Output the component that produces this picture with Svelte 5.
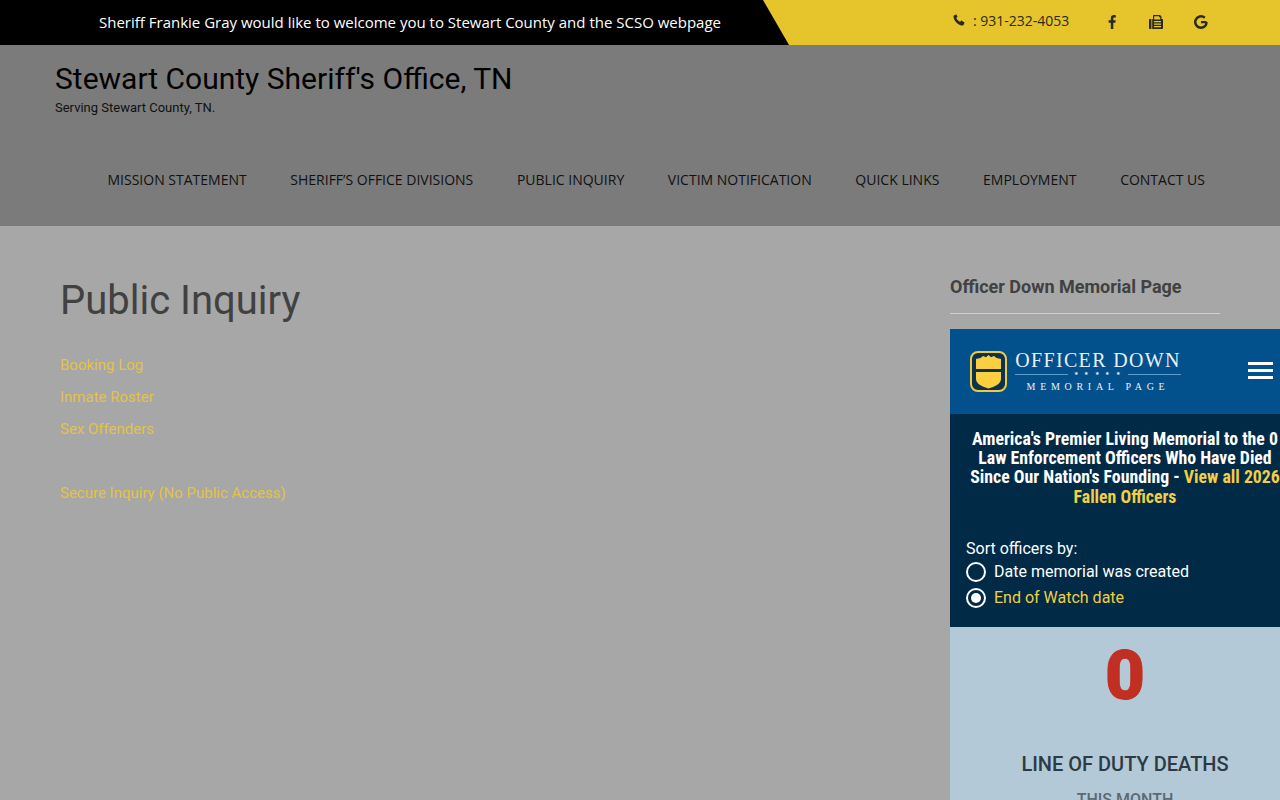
<script lang="ts">
  const nav = [
    'MISSION STATEMENT',
    'SHERIFF’S OFFICE DIVISIONS',
    'PUBLIC INQUIRY',
    'VICTIM NOTIFICATION',
    'QUICK LINKS',
    'EMPLOYMENT',
    'CONTACT US'
  ];
  const links = ['Booking Log', 'Inmate Roster', 'Sex Offenders'];
</script>

<div class="page">
  <div class="topbar">
    <div class="welcome">Sheriff Frankie Gray would like to welcome you to Stewart County and the SCSO webpage</div>
    <div class="contact">
      <div class="phone">
        <svg width="12" height="12" viewBox="0 0 24 24"><path fill="#2b2b1c" d="M6.2 1.2 2.6 2.6C1.3 3.2.8 4.5 1 6c1.2 8.200 8.800 15.800 17 17 1.500.2 2.800-.3 3.400-1.600l1.400-3.600c.2-.6 0-1.200-.5-1.500l-4.600-3c-.5-.3-1.100-.2-1.500.2l-1.900 2.100c-3.200-1.500-6.300-4.600-7.800-7.800l2.100-1.900c.4-.4.500-1 .2-1.500l-3-4.600c-.3-.5-1-.7-1.600-.5z"/></svg>
        <span>: 931-232-4053</span>
      </div>
      <div class="socials">
        <svg width="8" height="14" viewBox="0 0 8 14"><path fill="#2b2b1c" d="M5.300 14V7.800h2l.4-2.500H5.300V3.800c0-.8.300-1.200 1.200-1.200h1.300V.3C7.400.2 6.700.1 5.900.1 4 .1 2.800 1.200 2.800 3.400v1.900H.6v2.500h2.200V14z"/></svg>
        <svg class="fax" width="14" height="14" viewBox="0 0 14 14"><path fill="#2b2b1c" fill-rule="evenodd" d="M0 5c0-.6.400-1 1-1h1.400v10H1c-.6 0-1-.4-1-1zM3.200 4H4V1c0-.6.400-1 1-1h6l1.500 1.500V4h.5c.6 0 1 .4 1 1v8c0 .6-.4 1-1 1H3.200zM5.200 1.200V4.500h6V2.200H10V1.200zM5 6v1.200h7V6zm0 2.500v1.200h7V8.500zM5 11v1.200h7V11z"/></svg>
        <svg width="14" height="14" viewBox="0 0 24 24"><path fill="none" stroke="#2b2b1c" stroke-width="4.200" d="M21.500 12.200H12M21.500 12.200c0 5.800-4 9.600-9.500 9.600a9.800 9.800 0 1 1 6.500-17.100"/></svg>
      </div>
    </div>
  </div>

  <header class="masthead">
    <div class="brand">
      <h1>Stewart County Sheriff's Office, TN</h1>
      <p>Serving Stewart County, TN.</p>
    </div>
    <nav>
      {#each nav as item}
        <a href="#top">{item}</a>
      {/each}
    </nav>
  </header>

  <main class="content">
    <section class="inquiry">
      <h2>Public Inquiry</h2>
      <ul>
        {#each links as link}
          <li><a href="#top">{link}</a></li>
        {/each}
      </ul>
      <a class="secure" href="#top">Secure Inquiry (No Public Access)</a>
    </section>

    <aside class="rail">
      <h3>Officer Down Memorial Page</h3>
      <div class="odmp">
        <div class="odmp-head">
          <div class="odmp-logo">
            <svg width="37" height="41" viewBox="0 0 37 41">
              <rect x="1" y="1" width="35" height="39" rx="7" fill="#0b3350" stroke="#f0c93c" stroke-width="2"/>
              <path fill="#fbcf3f" d="M6 8 10.500 7l2.500-2 3 1.200L18.500 4 21 6.200 24 5l2.500 2L31 8V18H6z"/>
              <path fill="#fbcf3f" d="M6 21h25v7c0 5-6.500 7.500-12.500 9.500C12.500 35.500 6 33 6 28z"/>
            </svg>
            <div class="wordmark">
              <div class="wm-top">OFFICER DOWN</div>
              <div class="wm-rule"><i></i><b>★ ★ ★ ★ ★</b><i></i></div>
              <div class="wm-bottom">MEMORIAL PAGE</div>
            </div>
          </div>
          <div class="burger"><i></i><i></i><i></i></div>
        </div>

        <div class="odmp-intro">
          <p class="lead">America's Premier Living Memorial to the 0 Law Enforcement Officers Who Have Died Since Our Nation's Founding - <a href="#top">View all 2026 Fallen Officers</a></p>
          <div class="sort">Sort officers by:</div>
          <label class="radio"><span class="dot"></span>Date memorial was created</label>
          <label class="radio on"><span class="dot"></span>End of Watch date</label>
        </div>

        <div class="odmp-stats">
          <div class="count">0</div>
          <div class="stat-title">LINE OF DUTY DEATHS</div>
          <div class="stat-sub">THIS MONTH</div>
        </div>
      </div>
    </aside>
  </main>
</div>

<style>
  :global(body) {
    margin: 0;
    overflow: hidden;
  }

  .page {
    width: 1280px;
    height: 800px;
    overflow: hidden;
    background: #a7a7a7;
    font-family: Roboto, sans-serif;
  }

  .topbar {
    display: flex;
    height: 45px;
    background: #000;
  }

  .welcome {
    width: 763px;
    padding-left: 99px;
    box-sizing: border-box;
    color: #fff;
    font: 15px/45px "Open Sans", sans-serif;
    white-space: nowrap;
  }

  .contact {
    flex: 1;
    display: flex;
    background: #e5c42c;
    clip-path: polygon(0 0, 100% 0, 100% 100%, 26px 100%);
    padding: 13px 0 0 190px;
    box-sizing: border-box;
    color: #2b2b1c;
  }

  .phone {
    display: flex;
    gap: 8px;
    align-items: flex-start;
    font: 14px/16px "Open Sans", sans-serif;
    width: 155px;
  }

  .phone svg {
    margin-top: 1px;
  }

  .socials {
    display: flex;
    align-items: flex-start;
    gap: 32px;
    padding-top: 2px;
  }

  .fax {
    margin: 0 -1px 0 1px;
  }

  .masthead {
    height: 181px;
    background: #7b7b7b;
  }

  .brand {
    padding: 16px 0 0 55px;
    color: #000;
  }

  h1 {
    margin: 0;
    font: 400 30px/36px Roboto, sans-serif;
  }

  .brand p {
    margin: 3px 0 0;
    font: 13px/16px Roboto, sans-serif;
    color: #111;
  }

  nav {
    display: flex;
    justify-content: flex-end;
    gap: 43.650px;
    padding: 54px 75px 0 0;
  }

  nav a {
    color: #111;
    text-decoration: none;
    font: 14px/20px "Open Sans", sans-serif;
    white-space: nowrap;
  }

  .content {
    display: flex;
    padding-top: 45px;
  }

  .inquiry {
    width: 890px;
    flex-shrink: 0;
    padding-left: 60px;
    box-sizing: border-box;
  }

  h2 {
    margin: 6px 0 0;
    font: 400 40px/48px Roboto, sans-serif;
    color: #414141;
  }

  ul {
    list-style: none;
    margin: 24px 0 0;
    padding: 0;
  }

  li {
    height: 32px;
    line-height: 32px;
  }

  .inquiry a {
    color: #e2c347;
    text-decoration: none;
    font-size: 15px;
  }

  .secure {
    display: block;
    margin-top: 32px;
    line-height: 32px;
  }

  .rail {
    width: 350px;
    flex-shrink: 0;
    margin-left: 60px;
  }

  h3 {
    margin: 5px 0 0;
    width: 270px;
    height: 37px;
    border-bottom: 1px solid #cfcfcf;
    font: 700 18px/22px Roboto, sans-serif;
    color: #414141;
  }

  .odmp {
    margin-top: 15px;
    width: 350px;
  }

  .odmp-head {
    height: 85px;
    background: #02508c;
    display: flex;
    align-items: center;
    justify-content: space-between;
    padding: 0 27px 0 20px;
    box-sizing: border-box;
  }

  .odmp-logo {
    display: flex;
    align-items: center;
    gap: 8px;
  }

  .wordmark {
    width: 166px;
    color: #e8f1f8;
    font-family: "Liberation Serif", serif;
    text-align: center;
  }

  .wm-top {
    font-size: 20px;
    line-height: 20px;
    letter-spacing: 1.350px;
    white-space: nowrap;
  }

  .wm-rule {
    display: flex;
    align-items: center;
    gap: 6px;
    height: 8px;
  }

  .wm-rule i {
    flex: 1;
    height: 1px;
    background: #5f9ccb;
  }

  .wm-rule b {
    font-size: 5px;
    font-weight: 400;
    line-height: 8px;
    letter-spacing: 2.600px;
  }

  .wm-bottom {
    margin-top: 3px;
    font-size: 10px;
    line-height: 12px;
    letter-spacing: 4.700px;
    white-space: nowrap;
  }

  .burger {
    display: flex;
    flex-direction: column;
    gap: 4px;
    width: 25px;
    margin-top: -2px;
  }

  .burger i {
    height: 3px;
    background: #fff;
  }

  .odmp-intro {
    height: 213px;
    box-sizing: border-box;
    background: #012a47;
    padding: 14.800px 16px 0;
    color: #fff;
  }

  .lead {
    margin: 0 0 0 -1px;
    width: 320px;
    text-align: center;
    font: 700 17.800px/19.300px "Roboto Condensed", Roboto, sans-serif;
    font-stretch: condensed;
  }

  .lead a {
    color: #f0cf45;
    text-decoration: none;
  }

  .sort {
    margin-top: 32px;
    font-size: 16px;
    line-height: 22px;
  }

  .radio {
    display: flex;
    align-items: center;
    gap: 8px;
    height: 26px;
    font-size: 16px;
    margin-top: -1px;
  }

  .radio.on {
    margin-top: 0;
    color: #f0cf45;
  }

  .dot {
    width: 16px;
    height: 16px;
    border: 2px solid #fff;
    border-radius: 50%;
    box-sizing: content-box;
    display: flex;
    align-items: center;
    justify-content: center;
  }

  .radio.on .dot::after {
    content: "";
    width: 10px;
    height: 10px;
    border-radius: 50%;
    background: #fff;
  }

  .odmp-stats {
    height: 300px;
    background: #b3c9d7;
    text-align: center;
  }

  .count {
    padding-top: 8px;
    font-size: 69px;
    font-weight: 900;
    line-height: 82px;
    color: #c12e22;
    -webkit-text-stroke: 0.800px #c12e22;
  }

  .stat-title {
    margin-top: 35px;
    font-size: 20px;
    font-weight: 500;
    line-height: 24px;
    color: #2d3a44;
  }

  .stat-sub {
    margin-top: 14px;
    font-size: 16px;
    font-weight: 500;
    line-height: 20px;
    color: #5c6a75;
  }
</style>
